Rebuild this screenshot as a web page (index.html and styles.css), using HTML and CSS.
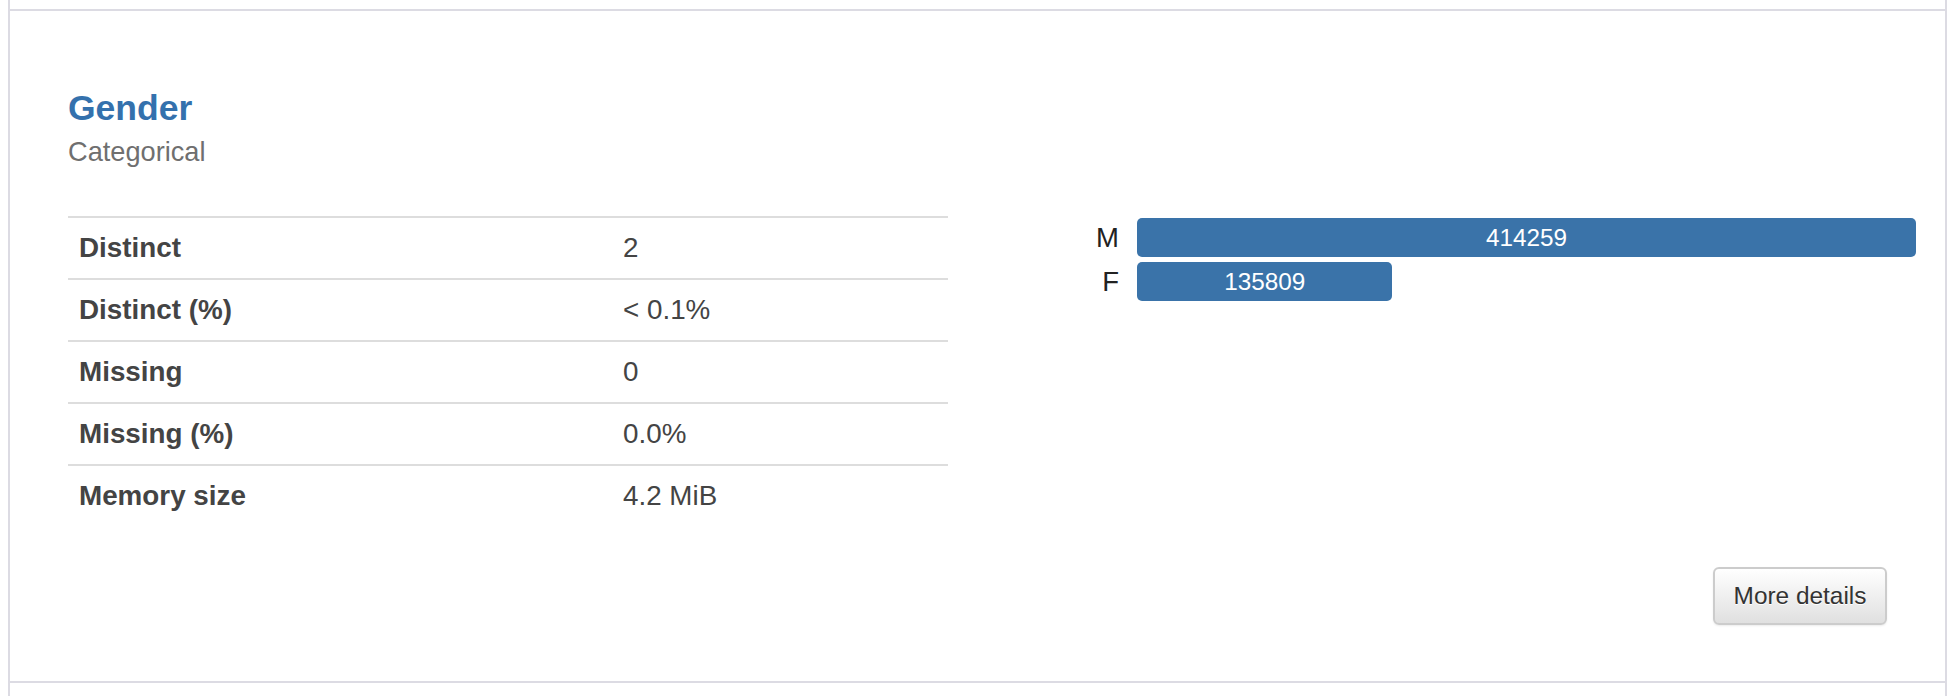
FILE: index.html
```html
<!DOCTYPE html>
<html>
<head>
<meta charset="utf-8">
<link rel="stylesheet" href="styles.css">
</head>
<body>
<div class="variables">
  <div class="row-prev"></div>
  <div class="variable">
    <div class="var-main">
      <div class="var-info">
        <h4 class="var-name">Gender</h4>
        <div class="var-type">Categorical</div>
        <table class="stats">
          <tr><th>Distinct</th><td>2</td></tr>
          <tr><th>Distinct (%)</th><td>&lt; 0.1%</td></tr>
          <tr><th>Missing</th><td>0</td></tr>
          <tr><th>Missing (%)</th><td>0.0%</td></tr>
          <tr><th>Memory size</th><td>4.2 MiB</td></tr>
        </table>
      </div>
      <div class="var-chart">
        <div class="bars">
          <div class="bar-label">M</div>
          <div class="bar-track"><div class="bar" style="width:100%">414259</div></div>
          <div class="bar-label">F</div>
          <div class="bar-track"><div class="bar" style="width:32.78%">135809</div></div>
        </div>
      </div>
    </div>
    <div class="var-actions">
      <button class="btn">More details</button>
    </div>
  </div>
  <div class="row-next"></div>
</div>
</body>
</html>
```

FILE: styles.css
```css
html, body {
  margin: 0;
  padding: 0;
  background: #fff;
}
body {
  font-family: "Liberation Sans", Arial, Helvetica, sans-serif;
  color: #333;
}
.variables {
  margin-left: 8px;
  width: 1939px;
  box-sizing: border-box;
  border-left: 2px solid #dcdbe3;
  border-right: 2px solid #dcdbe3;
}
.row-prev {
  height: 9px;
}
.variable {
  border-top: 2px solid #dcdbe3;
  padding: 78px 0 56px 0;
}
.row-next {
  border-top: 2px solid #dcdbe3;
  height: 20px;
}
.var-main {
  display: flex;
}
.var-info {
  width: 880px;
  margin-left: 58px;
}
.var-name {
  margin: 0;
  font-size: 35.5px;
  line-height: 38.5px;
  font-weight: bold;
  color: #3471ad;
}
.var-type {
  margin-top: 8.5px;
  font-size: 27.2px;
  line-height: 31.8px;
  color: #6f6f6f;
}
.stats {
  margin-top: 48px;
  width: 880px;
  border-collapse: collapse;
  font-size: 27.8px;
}
.stats th, .stats td {
  border-top: 2px solid #dddddd;
  height: 60px;
  padding: 0 11px;
  text-align: left;
  vertical-align: middle;
  line-height: 30px;
}
.stats th {
  width: 522px;
  font-weight: bold;
  color: #444;
}
.stats td {
  color: #444;
}
.var-chart {
  flex: 1;
  padding-left: 31px;
  padding-right: 29px;
}
.bars {
  margin-top: 129px;
  display: grid;
  grid-template-columns: 140px 1fr;
  column-gap: 18px;
  row-gap: 5px;
}
.bar-label {
  text-align: right;
  font-size: 27.5px;
  line-height: 39px;
  color: #222;
}
.bar-track {
  height: 39px;
}
.bar {
  height: 39px;
  background: #3a73a9;
  border-radius: 5px;
  color: #fff;
  font-size: 24.3px;
  line-height: 39px;
  text-align: center;
}
.var-actions {
  display: flex;
  justify-content: flex-end;
  padding-right: 58px;
  margin-top: 41px;
}
.btn {
  width: 174px;
  height: 58px;
  box-sizing: border-box;
  font-family: "Liberation Sans", Arial, Helvetica, sans-serif;
  font-size: 24.4px;
  color: #333;
  background: linear-gradient(to bottom, #ffffff 0%, #e0e0e0 100%);
  border: 2px solid #cccccc;
  border-radius: 6px;
  text-shadow: 0 1px 0 #fff;
  box-shadow: inset 0 1px 0 rgba(255,255,255,.15), 0 1px 2px rgba(0,0,0,.08);
  padding: 0;
}
```
